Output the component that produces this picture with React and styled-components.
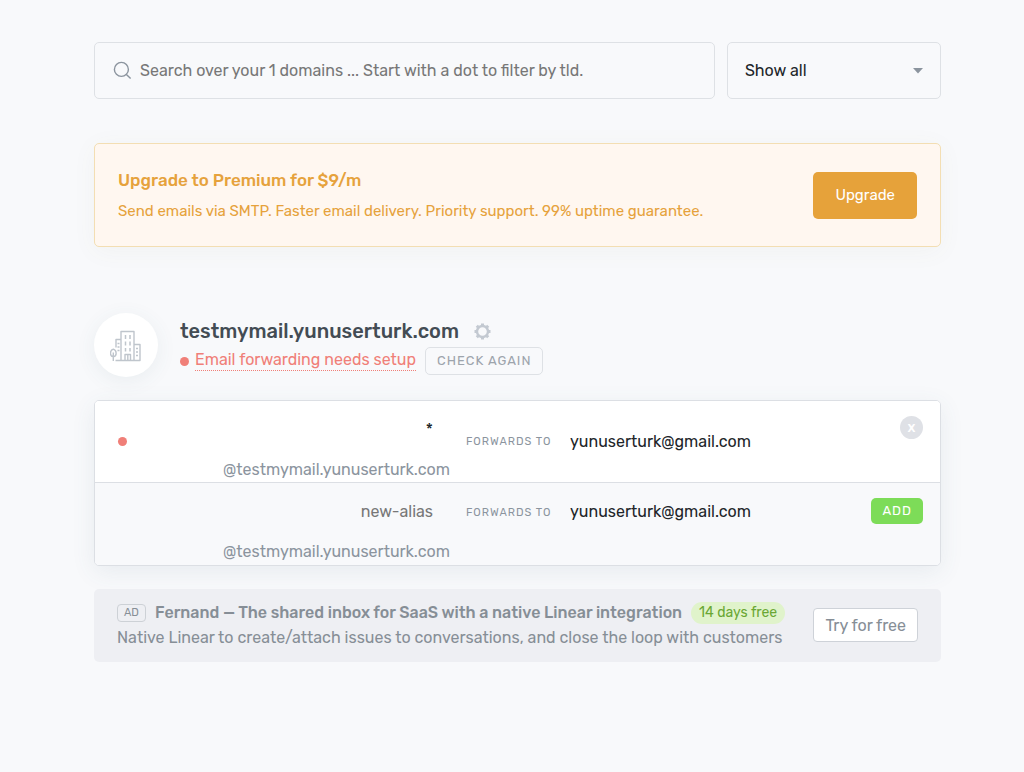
import React from "react";
import styled, { createGlobalStyle } from "styled-components";

const GlobalStyle = createGlobalStyle`
  *, *::before, *::after { box-sizing: border-box; }
  body {
    margin: 0;
    background: #f8f9fb;
    color: #212529;
    font-family: Rubik, Roboto, "Liberation Sans", sans-serif;
    font-size: 16px;
    line-height: 24px;
  }
  button, input, select { font: inherit; color: inherit; }
  h2, p { margin: 0; }
`;

const Page = styled.main`
  padding: 42px 83px 40px 94px;
`;

const Filters = styled.form`
  display: grid;
  grid-template-columns: minmax(0, 29fr) minmax(0, 10fr);
  gap: 12px;
`;

const Field = styled.label`
  display: flex;
  align-items: center;
  gap: 8px;
  height: 57px;
  padding: 0 17px;
  border: 1px solid #dee1e5;
  border-radius: 5px;
  color: #8b949e;
`;

const SearchInput = styled.input`
  flex: 1;
  min-width: 0;
  padding: 0;
  border: 0;
  outline: 0;
  background: transparent;
  &::placeholder { color: #777; opacity: 1; }
`;

const Select = styled.select`
  flex: 1;
  min-width: 0;
  padding: 0;
  border: 0;
  outline: 0;
  appearance: none;
  background: transparent;
  color: #212529;
`;

const Banner = styled.section`
  display: flex;
  align-items: center;
  justify-content: space-between;
  gap: 24px;
  margin-top: 44px;
  padding: 22px 23px;
  border: 1px solid #f3deb3;
  border-radius: 5px;
  background: #fff7f0;
  color: #e6a23c;
  box-shadow: 0 4px 24px rgba(120, 110, 80, 0.05);
`;

const BannerTitle = styled.h2`
  font-size: 17px;
  font-weight: 500;
  line-height: 28px;
`;

const BannerText = styled.p`
  padding-top: 4px;
  font-size: 15px;
  line-height: 26px;
`;

const UpgradeButton = styled.button`
  flex: none;
  height: 47px;
  padding: 0 22px;
  border: 0;
  border-radius: 5px;
  background: #e6a23a;
  color: #fff;
  font-size: 15px;
`;

const DomainHeader = styled.header`
  display: flex;
  align-items: center;
  gap: 22px;
  margin-top: 66px;
`;

const Avatar = styled.div`
  display: flex;
  flex: none;
  align-items: center;
  justify-content: center;
  width: 64px;
  height: 64px;
  border-radius: 50%;
  background: #fff;
  box-shadow: 0 4px 20px rgba(70, 100, 120, 0.08);
`;

const TitleLine = styled.div`
  display: flex;
  align-items: center;
  gap: 15px;
`;

const DomainName = styled.h2`
  color: #434c54;
  font-size: 20px;
  font-weight: 500;
  line-height: 32px;
`;

const IconButton = styled.button`
  display: flex;
  padding: 0;
  border: 0;
  background: none;
  color: #c3c9d1;
`;

const StatusLine = styled.div`
  display: flex;
  align-items: center;
`;

const Dot = styled.span`
  flex: none;
  width: 9px;
  height: 9px;
  border-radius: 50%;
  background: #f07f78;
`;

const SetupLink = styled.a`
  margin: 0 9px 0 6px;
  padding-bottom: 1px;
  border-bottom: 1px dotted #f07f78;
  color: #f07f78;
  line-height: 18px;
  text-decoration: none;
`;

const CheckButton = styled.button`
  height: 28px;
  padding: 0 11px;
  border: 1px solid #dee1e5;
  border-radius: 5px;
  background: transparent;
  color: #9da4ac;
  font-size: 13px;
  letter-spacing: 1px;
`;

const AliasCard = styled.section`
  margin-top: 23px;
  border: 1px solid #dcdfe4;
  border-radius: 5px;
  background: #fff;
  box-shadow: 0 6px 24px rgba(70, 100, 120, 0.09);
  overflow: hidden;
`;

const AliasRow = styled.form`
  display: grid;
  grid-template-columns: 9px minmax(0, 307px) 88px minmax(0, 1fr) auto;
  align-items: ${(p) => (p.$draft ? "start" : "center")};
  column-gap: 16px;
  padding: ${(p) => (p.$draft ? "14px 17px 1px 23px" : "0 17px 0 23px")};
  background: ${(p) => (p.$draft ? "#f8f9fb" : "#fff")};
  & + & { border-top: 1px solid #dcdfe4; }
`;

const AliasCell = styled.div`
  display: flex;
  flex-direction: column;
  align-items: flex-end;
  gap: 15px;
  padding-top: ${(p) => (p.$draft ? "0" : "14px")};
`;

const TextInput = styled.input`
  width: 100%;
  height: 28px;
  padding: ${(p) => (p.$alias ? "0 17px 0 0" : "0")};
  border: 0;
  outline: 0;
  background: transparent;
  text-align: ${(p) => (p.$alias ? "right" : "left")};
  &::placeholder { color: #777; opacity: 1; }
`;

const Suffix = styled.span`
  color: #8b949e;
  line-height: 24px;
`;

const Forwards = styled.span`
  color: #8b949e;
  font-size: 11px;
  letter-spacing: 1px;
  line-height: ${(p) => (p.$draft ? "32px" : "28px")};
  white-space: nowrap;
`;

const RemoveButton = styled.button`
  align-self: start;
  width: 23px;
  height: 23px;
  margin-top: 15px;
  padding: 0;
  border: 0;
  border-radius: 50%;
  background: #dfe1e6;
  color: #fff;
  font-size: 14px;
  font-weight: 500;
  line-height: 22px;
`;

const AddButton = styled.button`
  height: 26px;
  margin-top: 1px;
  padding: 0 11px;
  border: 0;
  border-radius: 5px;
  background: #7ddc58;
  color: #fff;
  font-size: 13px;
  letter-spacing: 1px;
`;

const Ad = styled.aside`
  display: flex;
  align-items: center;
  justify-content: space-between;
  gap: 24px;
  margin-top: 23px;
  padding: 11px 23px 12px;
  border-radius: 5px;
  background: #eeeff3;
  color: #868e96;
  line-height: 25px;
`;

const AdTitle = styled.div`
  display: flex;
  align-items: center;
  gap: 9px;
`;

const AdHeading = styled.strong`
  font-weight: 500;
`;

const AdTag = styled.span`
  padding: 0 6px;
  border: 1px solid #cdd1d6;
  border-radius: 4px;
  font-size: 11px;
  line-height: 16px;
`;

const Trial = styled.span`
  padding: 0 8px;
  border-radius: 11px;
  background: #e0f3cb;
  color: #6aa734;
  font-size: 14px;
  line-height: 22px;
  white-space: nowrap;
`;

const TryButton = styled.button`
  flex: none;
  height: 34px;
  padding: 0 11px;
  border: 1px solid #ced2d8;
  border-radius: 4px;
  background: #fff;
  color: #868e96;
`;

const SearchIcon = () => (
  <svg width="20" height="19" viewBox="-1 0 20 19" fill="none" stroke="#8b949e" strokeWidth="1.4">
    <circle cx="8.4" cy="8.4" r="7" />
    <path d="M13.4 13.4 17.6 17.6" />
  </svg>
);

const Caret = () => (
  <svg width="10" height="6" viewBox="0 0 10 6">
    <path d="M0 0h10L5 5.5z" fill="#8b949e" />
  </svg>
);

const Buildings = () => (
  <svg width="32" height="33" viewBox="0.5 -1 32 33" fill="none" stroke="#bfc5cc" strokeWidth="1.4" strokeLinejoin="round">
    <path d="M6 30.5h24.5v-16h-6M11.5 30.5v-29h13v29M11.500 9.500h-5v8" />
    <path d="M15.500 30.500v-6h5.500v6M18.300 24.500v6" />
    <path d="M3.800 19.200c-3.800 1.200-3.800 6.800 0 7.600 3.800-.8 3.800-6.400 0-7.600zM3.800 22.500V31" />
    <path d="M16 5v4M20.500 5v4M16 11.500v4M20.500 11.500v4M16 18v3.500M20.500 18v3.500" strokeWidth="1.5" />
    <path d="M8 13.500h2M8 17h2M8 20.500h2M26.500 18.500h2M26.500 22h2M26.500 25.500h2" />
  </svg>
);

const Gear = () => (
  <svg width="17" height="17" viewBox="0 0 17 17" fill="none" stroke="currentColor">
    <circle cx="8.500" cy="8.500" r="5.500" strokeWidth="2.400" />
    <path
      d="M8.500.5v2M8.500 14.500v2M.5 8.500h2M14.500 8.500h2M2.800 2.800l1.500 1.500M12.700 12.700l1.500 1.500M2.800 14.200l1.500-1.500M12.700 4.300l1.500-1.500"
      strokeWidth="3"
    />
  </svg>
);

const DOMAIN = "testmymail.yunuserturk.com";
const EMAIL = "yunuserturk@gmail.com";

export default function App() {
  return (
    <>
      <GlobalStyle />
      <Page>
        <Filters>
          <Field>
            <SearchIcon />
            <SearchInput
              aria-label="Search domains"
              placeholder="Search over your 1 domains ... Start with a dot to filter by tld."
            />
          </Field>
          <Field>
            <Select aria-label="Filter domains">
              <option>Show all</option>
            </Select>
            <Caret />
          </Field>
        </Filters>

        <Banner>
          <div>
            <BannerTitle>Upgrade to Premium for $9/m</BannerTitle>
            <BannerText>
              Send emails via SMTP. Faster email delivery. Priority support. 99% uptime guarantee.
            </BannerText>
          </div>
          <UpgradeButton type="button">Upgrade</UpgradeButton>
        </Banner>

        <DomainHeader>
          <Avatar>
            <Buildings />
          </Avatar>
          <div>
            <TitleLine>
              <DomainName>{DOMAIN}</DomainName>
              <IconButton type="button" aria-label="Domain settings">
                <Gear />
              </IconButton>
            </TitleLine>
            <StatusLine>
              <Dot />
              <SetupLink href="#setup">Email forwarding needs setup</SetupLink>
              <CheckButton type="button">CHECK AGAIN</CheckButton>
            </StatusLine>
          </div>
        </DomainHeader>

        <AliasCard>
          <AliasRow>
            <Dot />
            <AliasCell>
              <TextInput $alias aria-label="Alias" defaultValue="*" />
              <Suffix>@{DOMAIN}</Suffix>
            </AliasCell>
            <Forwards>FORWARDS TO</Forwards>
            <TextInput aria-label="Forward address" defaultValue={EMAIL} />
            <RemoveButton type="button" aria-label="Remove alias">x</RemoveButton>
          </AliasRow>
          <AliasRow $draft>
            <span />
            <AliasCell $draft>
              <TextInput $alias aria-label="New alias" placeholder="new-alias" />
              <Suffix>@{DOMAIN}</Suffix>
            </AliasCell>
            <Forwards $draft>FORWARDS TO</Forwards>
            <TextInput aria-label="New forward address" defaultValue={EMAIL} />
            <AddButton type="button">ADD</AddButton>
          </AliasRow>
        </AliasCard>

        <Ad>
          <div>
            <AdTitle>
              <AdTag>AD</AdTag>
              <AdHeading>Fernand — The shared inbox for SaaS with a native Linear integration</AdHeading>
              <Trial>14 days free</Trial>
            </AdTitle>
            <p>Native Linear to create/attach issues to conversations, and close the loop with customers</p>
          </div>
          <TryButton type="button">Try for free</TryButton>
        </Ad>
      </Page>
    </>
  );
}
